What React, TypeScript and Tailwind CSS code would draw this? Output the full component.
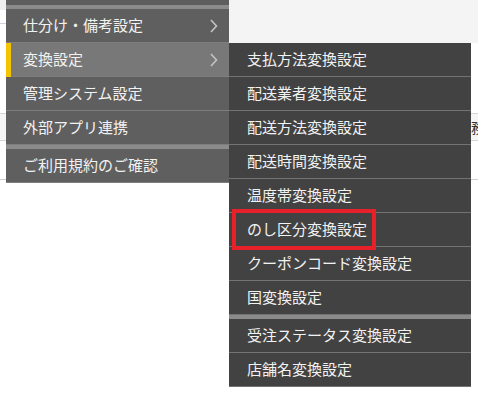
import React from 'react';

const FONT = { fontFamily: '"Noto Sans CJK JP", "Noto Sans", sans-serif' };

const leftItems = [
  { label: '仕分け・備考設定', arrow: true },
  { label: '変換設定', arrow: true, active: true },
  { label: '管理システム設定' },
  { label: '外部アプリ連携', sepAfter: true },
  { label: 'ご利用規約のご確認' },
];

const subItems = [
  { label: '支払方法変換設定' },
  { label: '配送業者変換設定' },
  { label: '配送方法変換設定' },
  { label: '配送時間変換設定' },
  { label: '温度帯変換設定' },
  { label: 'のし区分変換設定', marked: true },
  { label: 'クーポンコード変換設定' },
  { label: '国変換設定', sepAfter: true },
  { label: '受注ステータス変換設定' },
  { label: '店舗名変換設定' },
];

function Chevron() {
  return (
    <svg width="8" height="14" viewBox="0 0 8 14" fill="none">
      <polyline points="1,1 6.5,7 1,13" stroke="#c4c4c4" strokeWidth="1.6" />
    </svg>
  );
}

export default function App() {
  return (
    <div className="relative w-[478px] h-[409px] overflow-hidden bg-white" style={FONT}>
      {/* page behind the menus */}
      <div className="flex h-[43px]">
        <div className="w-[6px] flex flex-col">
          <div className="h-[10px] bg-[#eeeeee]" />
          <div className="h-[13px] bg-white" />
          <div className="h-px bg-[#d2d2de]" />
        </div>
        <div className="flex-1 bg-[#f4f4f4]" />
      </div>
      <div className="h-[70px]" />
      <div className="h-[28px] border-y border-[#d6d6d6] bg-[#f5f5f5] pl-[471px] whitespace-nowrap text-[14px] leading-[26px] text-[#333]">
        務
      </div>
      <div className="h-[38px]" />
      <div className="h-px bg-[#d0d0d0]" />

      {/* main menu */}
      <div className="absolute left-[6px] top-0 w-[223px] bg-[#5f5f5f]">
        <div className="h-[5px] bg-[#5e5e5e]" />
        <div className="h-[4px] bg-[#8b8b8b]" />
        {leftItems.map((item) => (
          <React.Fragment key={item.label}>
            <div
              className={`relative flex items-center justify-between h-[34px] border-b border-[#7e7e7e] pl-[17px] pr-[11px] text-[15px] text-[#f2f2f2] ${
                item.active ? 'bg-[#787878]' : 'bg-[#5f5f5f]'
              }`}
            >
              {item.active && <div className="absolute left-0 top-0 bottom-[-1px] w-[5px] bg-[#f5c400]" />}
              <span>{item.label}</span>
              {item.arrow && <Chevron />}
            </div>
            {item.sepAfter && <div className="h-[4px] bg-[#8b8b8b]" />}
          </React.Fragment>
        ))}
      </div>

      {/* sub menu */}
      <div className="absolute left-[229px] top-[43px] w-[242px] bg-[#424242]">
        {subItems.map((item) => (
          <React.Fragment key={item.label}>
            <div className="relative flex items-center h-[34px] border-b border-[#737373] pl-[18px] text-[15px] text-[#f2f2f2]">
              {item.marked && (
                <div className="absolute left-[3px] top-[-4px] w-[144px] h-[41px] border-[4px] border-[#e8202a]" />
              )}
              <span>{item.label}</span>
            </div>
            {item.sepAfter && <div className="h-[4px] bg-[#8b8b8b]" />}
          </React.Fragment>
        ))}
      </div>
    </div>
  );
}
